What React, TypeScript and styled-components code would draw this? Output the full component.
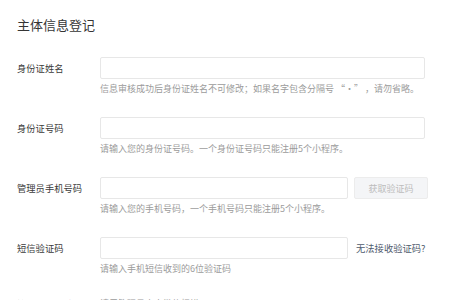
import React from "react";
import styled, { createGlobalStyle } from "styled-components";

const GlobalStyle = createGlobalStyle`
  html, body {
    margin: 0;
    padding: 0;
    background: #fff;
  }
  body {
    font-family: "Noto Sans CJK SC", "Noto Sans", sans-serif;
  }
`;

interface Field {
  label: string;
  help: string;
  extra?: "button" | "link";
}

const fields: Field[] = [
  {
    label: "身份证姓名",
    help: "信息审核成功后身份证姓名不可修改；如果名字包含分隔号 “·” ，请勿省略。",
  },
  {
    label: "身份证号码",
    help: "请输入您的身份证号码。一个身份证号码只能注册5个小程序。",
  },
  {
    label: "管理员手机号码",
    help: "请输入您的手机号码，一个手机号码只能注册5个小程序。",
    extra: "button",
  },
  {
    label: "短信验证码",
    help: "请输入手机短信收到的6位验证码",
    extra: "link",
  },
];

export default function App() {
  return (
    <>
      <GlobalStyle />
      <Page>
        <Title>主体信息登记</Title>
        <Form>
          {fields.map((f) => (
            <Row key={f.label}>
              <Label>{f.label}</Label>
              <FieldCol>
                <Control>
                  <Input short={!!f.extra} />
                  {f.extra === "button" && <CodeButton>获取验证码</CodeButton>}
                  {f.extra === "link" && <HelpLink>无法接收验证码?</HelpLink>}
                </Control>
                <Help>{f.help}</Help>
              </FieldCol>
            </Row>
          ))}
          <Row>
            <NoteLabel>管理员身份验证</NoteLabel>
            <NoteText>请用管理员本人微信扫描</NoteText>
          </Row>
        </Form>
      </Page>
    </>
  );
}

const Page = styled.div`
  padding: 16px 0 0 17px;
  width: 450px;
  height: 300px;
  box-sizing: border-box;
  overflow: hidden;
`;

const Title = styled.h1`
  margin: 0;
  font-size: 13px;
  line-height: 18px;
  font-weight: 400;
  color: #353535;
`;

const Form = styled.div`
  margin-top: 23px;
  display: flex;
  flex-direction: column;
  gap: 22px;
`;

const Row = styled.div`
  display: flex;
  align-items: flex-start;
`;

const Label = styled.div`
  width: 83px;
  flex-shrink: 0;
  font-size: 9.3px;
  line-height: 22px;
  color: #3a3a3a;
`;

const NoteLabel = styled(Label)`
  line-height: 14px;
`;

const NoteText = styled.div`
  font-size: 9px;
  line-height: 14px;
  color: #9b9b9b;
  white-space: nowrap;
`;

const FieldCol = styled.div`
  display: flex;
  flex-direction: column;
`;

const Control = styled.div`
  display: flex;
  align-items: center;
  height: 22px;
`;

const Input = styled.div<{ short?: boolean }>`
  width: ${(p) => (p.short ? "248px" : "325px")};
  height: 22px;
  box-sizing: border-box;
  border: 1px solid #e7e7e7;
  border-radius: 2px;
  background: #fff;
`;

const CodeButton = styled.div`
  margin-left: 6px;
  width: 74px;
  height: 22px;
  box-sizing: border-box;
  border: 1px solid #ececec;
  border-radius: 2px;
  background: #f4f5f7;
  color: #bcbcbc;
  font-size: 9px;
  display: flex;
  align-items: center;
  justify-content: center;
`;

const HelpLink = styled.span`
  margin-left: 8px;
  font-size: 9.3px;
  color: #4f5b6d;
  white-space: nowrap;
`;

const Help = styled.div`
  margin-top: 4px;
  font-size: 9px;
  line-height: 12px;
  color: #9b9b9b;
  white-space: nowrap;
`;
